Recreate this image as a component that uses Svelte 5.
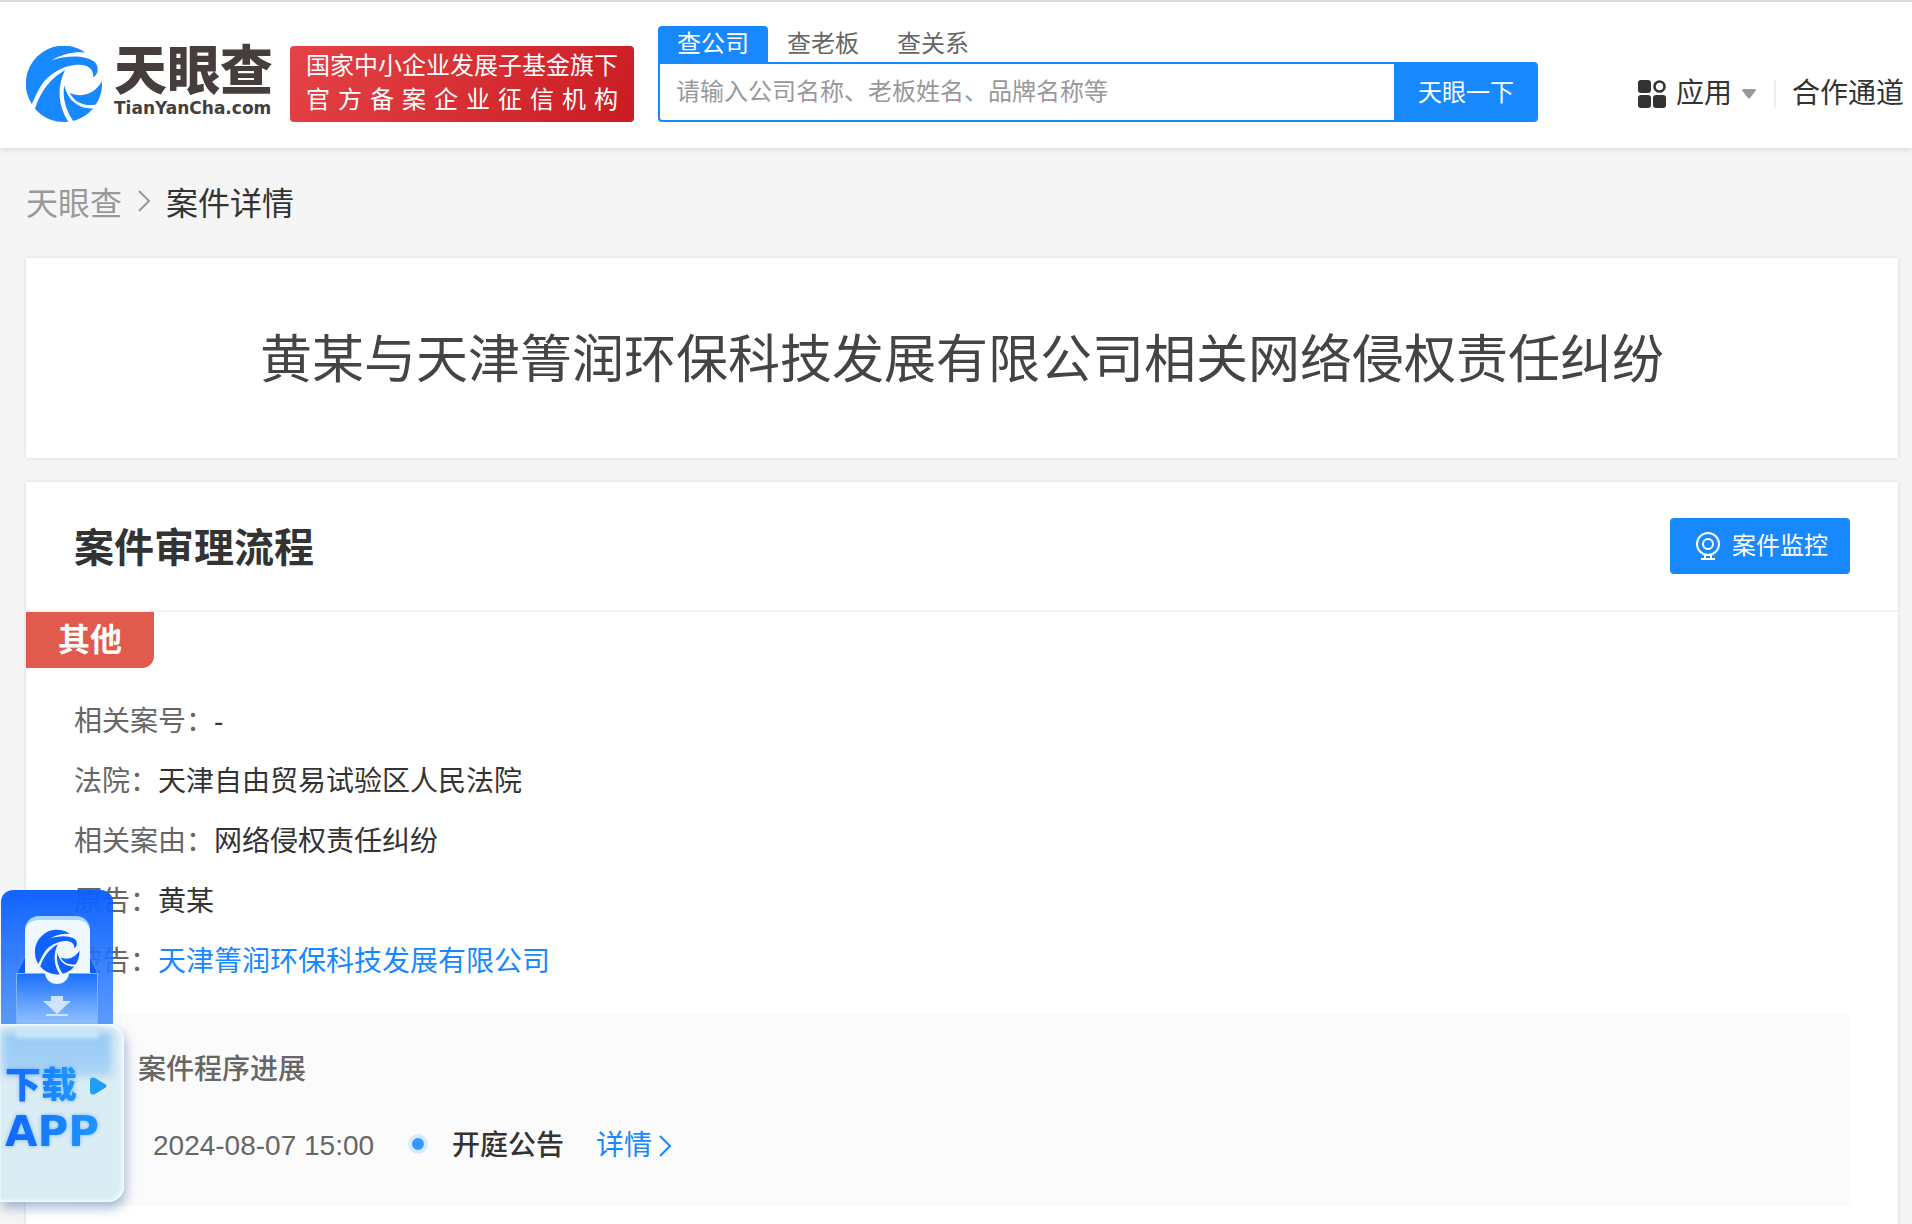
<script lang="ts">
    type Field = { label: string; value: string; href?: string };

    const tabs = ['查公司', '查老板', '查关系'];

    const fields: Field[] = [
        { label: '相关案号', value: '-' },
        { label: '法院', value: '天津自由贸易试验区人民法院' },
        { label: '相关案由', value: '网络侵权责任纠纷' },
        { label: '原告', value: '黄某' },
        { label: '被告', value: '天津箐润环保科技发展有限公司', href: '#company' },
    ];

    let activeTab = 0;
    let keyword = '';
</script>

{#snippet swirl()}
    <path d="M58 6.300A37 37 0 0 0 5.700 56.700C9 49 13 40 18 34C24 27 35 20 46 18.700C57 17 66 20 65.500 30.500C68 29 69.500 26 69.700 24C70.500 17 66 14 61 12.300C49 8.500 36 10.500 24.700 14C35 8 46 5.500 58 6.300Z" />
    <path d="M38 23.700C26 30 15 42 8.700 61A37 37 0 0 0 41.300 73.700C31 58 30 40 38 23.700Z" />
    <path d="M37.300 38.500C35 50 39 63 46 73A37 37 0 0 0 65.500 60.700C52 61.500 41 54 37.300 38.500Z" />
    <path d="M42.500 45.500C53 51 67 47 74 34.300A37 37 0 0 1 68 57C57 59 47 55 42.500 45.500Z" />
{/snippet}

<header class="topbar">
    <a class="logo" href="#home" aria-label="天眼查">
        <svg class="logo_mark" viewBox="0 0 74 74" fill="#1888ff">{@render swirl()}</svg>
        <span class="logo_text">
            <span class="logo_cn">天眼查</span>
            <span class="logo_en">TianYanCha.com</span>
        </span>
    </a>
    <div class="badge">
        <span>国家中小企业发展子基金旗下</span>
        <span>官方备案企业征信机构</span>
    </div>
    <form class="search" on:submit|preventDefault>
        <div class="tabs">
            {#each tabs as tab, i}
                <button type="button" class:active={activeTab === i} on:click={() => (activeTab = i)}>
                    {tab}
                </button>
            {/each}
        </div>
        <div class="search_box">
            <input
                type="text"
                aria-label="搜索"
                placeholder="请输入公司名称、老板姓名、品牌名称等"
                bind:value={keyword}
            />
            <button type="submit">天眼一下</button>
        </div>
    </form>
    <nav>
        <a class="apps" href="#apps">
            <svg width="28" height="28" viewBox="0 0 28 28" fill="#333">
                <rect x="0" y="0" width="13" height="13" rx="3" />
                <rect x="0" y="15" width="13" height="13" rx="3" />
                <rect x="15" y="15" width="13" height="13" rx="3" />
                <circle cx="21.5" cy="6.5" r="5" fill="none" stroke="#333" stroke-width="2.6" />
            </svg>
            应用
            <svg width="14" height="10" viewBox="0 0 14 10" fill="#999">
                <path d="M1 0H13Q14.500 .6 13.500 2L8 9Q7 10 6 9L.5 2Q-.5 .6 1 0Z" />
            </svg>
        </a>
        <a class="partner" href="#partner">合作通道</a>
    </nav>
</header>

<main>
    <div class="crumbs">
        <a href="#home">天眼查</a>
        <svg width="14" height="24" viewBox="0 0 14 24" fill="none" stroke="#999" stroke-width="2">
            <path d="M2 2L12 12L2 22" />
        </svg>
        <span>案件详情</span>
    </div>

    <section class="card title_card">
        <h1>黄某与天津箐润环保科技发展有限公司相关网络侵权责任纠纷</h1>
    </section>

    <section class="card">
        <div class="card_head">
            <h2>案件审理流程</h2>
            <button type="button" class="monitor">
                <svg width="24" height="28" viewBox="0 0 24 28" fill="none" stroke="#fff" stroke-width="2">
                    <circle cx="12" cy="12" r="11" />
                    <circle cx="12" cy="12" r="5" />
                    <path d="M9 22.500V26M15 22.500V26M5 27H19" />
                </svg>
                案件监控
            </button>
        </div>
        <div class="tag">其他</div>
        <dl>
            {#each fields as field}
                <div>
                    <dt>{field.label}{'\uff1a'}</dt>
                    <dd>
                        {#if field.href}
                            <a href={field.href}>{field.value}</a>
                        {:else}
                            {field.value}
                        {/if}
                    </dd>
                </div>
            {/each}
        </dl>
        <div class="progress">
            <h3>案件程序进展</h3>
            <div class="event">
                <time>2024-08-07 15:00</time>
                <i class="dot"></i>
                <strong>开庭公告</strong>
                <a href="#detail">
                    详情
                    <svg width="14" height="24" viewBox="0 0 14 24" fill="none" stroke="#1888ff" stroke-width="2">
                        <path d="M2 2L12 12L2 22" />
                    </svg>
                </a>
            </div>
        </div>
    </section>
</main>

<a class="download" href="#download" aria-label="下载APP">
    <span class="folder">
        <svg width="113" height="134" viewBox="0 0 113 134">
            <defs>
                <linearGradient id="pocket" x1="0" y1="0" x2="0" y2="1">
                    <stop offset="0" stop-color="#1a70fd" />
                    <stop offset="1" stop-color="#93c3fe" />
                </linearGradient>
            </defs>
            <path d="M25 66L16.500 84H98L90 66Z" fill="#0f5df0" stroke="#4c94fb" />
            <rect x="25" y="26" width="65" height="70" rx="14" fill="#a5d6ff" />
            <path d="M25 44Q25 30 39 30H76Q90 30 90 44V84H25Z" fill="#f0f8ff" />
            <path d="M16.500 83.500H97.500V134H16.500Z" fill="url(#pocket)" stroke="#7db5ff" />
            <path d="M45 83H69A12 11 0 0 1 45 83Z" fill="#f0f8ff" />
            <g transform="translate(35 40) scale(.6)" fill="#1161ff">{@render swirl()}</g>
            <path d="M51 106H63V111H71L57 124L43 111H51ZM46 124H68V126H46Z" fill="#cfe5ff" />
        </svg>
    </span>
    <span class="glass">
        <span class="glass_row">
            <span class="glass_text">下载</span>
            <svg width="17" height="18" viewBox="0 0 17 18" fill="#1f9dfb">
                <path d="M0 4Q0-1 5 1L15 7Q18 9 15 11L5 17Q0 19 0 14Z" />
            </svg>
        </span>
        <span class="glass_text glass_app">APP</span>
    </span>
</a>

<style>
    :global(body) {
        background: #f5f5f5;
        color: #333;
        font-family: 'Liberation Sans', 'Noto Sans CJK SC', sans-serif;
        font-size: 28px;
    }

    a {
        color: inherit;
        text-decoration: none;
    }

    button,
    input {
        font: inherit;
        border: none;
        padding: 0;
        cursor: pointer;
    }

    svg {
        display: block;
        flex: none;
    }

    .topbar {
        position: relative;
        display: flex;
        align-items: flex-end;
        box-sizing: border-box;
        height: 148px;
        padding: 0 8px 26px 26px;
        border-top: 2px solid #dadada;
        background: #fff;
        box-shadow: 0 2px 6px rgba(0, 0, 0, 0.1);
        white-space: nowrap;
    }

    .logo {
        display: flex;
        align-items: flex-start;
        gap: 12px;
        width: 246px;
        height: 76px;
        margin-right: 18px;
    }

    .logo_mark {
        width: 76px;
        height: 76px;
    }

    .logo_text {
        display: flex;
        flex-direction: column;
        color: #463d3d;
    }

    .logo_cn {
        font-size: 53px;
        font-weight: 900;
        line-height: 52px;
    }

    .logo_en {
        font-family: 'DejaVu Sans', sans-serif;
        font-size: 17px;
        font-weight: 700;
        line-height: 20px;
    }

    .badge {
        display: flex;
        flex-direction: column;
        box-sizing: border-box;
        width: 344px;
        height: 76px;
        padding: 3px 16px;
        border-radius: 4px;
        background: linear-gradient(120deg, #e54347, #c91c22);
        color: #fff;
        font-size: 24px;
        line-height: 34px;
    }

    .badge span {
        text-align-last: justify;
    }

    .search {
        flex: 0 1 880px;
        margin-left: 24px;
    }

    .tabs {
        display: flex;
    }

    .tabs button {
        width: 110px;
        height: 36px;
        border-radius: 4px 4px 0 0;
        background: none;
        color: #666;
        font-size: 24px;
        line-height: 36px;
    }

    .tabs .active {
        background: #1888ff;
        color: #fff;
    }

    .search_box {
        display: flex;
    }

    .search_box input {
        flex: 1;
        min-width: 0;
        box-sizing: border-box;
        height: 60px;
        padding: 0 16px;
        border: 2px solid #1888ff;
        border-right: none;
        border-radius: 0 0 0 4px;
        outline: none;
        cursor: text;
        font-size: 24px;
    }

    .search_box input::placeholder {
        color: #999;
    }

    .search_box button {
        width: 144px;
        padding-bottom: 4px;
        border-radius: 0 4px 4px 0;
        background: #1888ff;
        color: #fff;
        font-size: 24px;
    }

    nav {
        display: flex;
        align-items: center;
        height: 56px;
        margin-left: auto;
        line-height: 28px;
    }

    .apps {
        display: flex;
        align-items: center;
        gap: 10px;
    }

    .partner {
        margin-left: 18px;
        padding-left: 16px;
        border-left: 2px solid #eee;
    }

    main {
        padding: 0 14px 0 26px;
    }

    .crumbs {
        display: flex;
        align-items: center;
        gap: 15px;
        box-sizing: border-box;
        height: 110px;
        padding-bottom: 4px;
        font-size: 32px;
    }

    .crumbs a {
        color: #999;
    }

    .card {
        margin-bottom: 24px;
        background: #fff;
        box-shadow: 0 0 4px rgba(0, 0, 0, 0.12);
    }

    .title_card {
        padding: 66px 40px 62px;
        text-align: center;
    }

    h1,
    h2,
    h3,
    dl,
    dd {
        margin: 0;
    }

    h1 {
        color: #444;
        font-size: 52px;
        font-weight: 400;
        line-height: 72px;
    }

    .card_head {
        display: flex;
        justify-content: space-between;
        align-items: center;
        padding: 36px 48px;
        border-bottom: 2px solid #f3f3f3;
    }

    h2 {
        padding-top: 4px;
        font-size: 40px;
        font-weight: 700;
        line-height: 52px;
    }

    .monitor {
        display: flex;
        justify-content: center;
        align-items: center;
        gap: 12px;
        width: 180px;
        height: 56px;
        padding-left: 4px;
        border-radius: 4px;
        background: #1888ff;
        color: #fff;
        font-size: 24px;
        line-height: 28px;
    }

    .tag {
        width: 128px;
        border-radius: 0 0 12px 0;
        background: #e05a4d;
        color: #fff;
        font-size: 32px;
        font-weight: 700;
        line-height: 56px;
        text-align: center;
    }

    dl {
        padding: 24px 48px 0;
    }

    dl div {
        display: flex;
        line-height: 60px;
    }

    dt {
        color: #666;
    }

    dl a,
    .event a {
        color: #1888ff;
    }

    .progress {
        margin: 22px 48px 0;
        padding: 34px 64px 38px;
        border-radius: 4px;
        background: #fbfbfb;
    }

    .card:last-child {
        margin-bottom: 0;
        padding-bottom: 48px;
    }

    h3 {
        color: #666;
        font-size: 28px;
        font-weight: 500;
        line-height: 44px;
    }

    .event {
        display: flex;
        align-items: center;
        margin-top: 32px;
        padding-left: 15px;
        line-height: 44px;
    }

    time {
        color: #666;
    }

    .dot {
        width: 12px;
        height: 12px;
        margin: 0 24px 4px 34px;
        border: 4px solid #d6eaff;
        border-radius: 50%;
        background: #3399ff;
    }

    strong {
        font-weight: 500;
    }

    .event a {
        display: flex;
        align-items: center;
        gap: 6px;
        margin-left: 32px;
    }

    .download {
        position: fixed;
        left: 0;
        bottom: 22px;
        width: 124px;
    }

    .folder {
        display: block;
        width: 112px;
        margin-left: 1px;
        border-radius: 12px 12px 0 0;
        background: linear-gradient(rgba(10, 94, 255, 0.97), rgba(60, 138, 250, 0.84));
    }

    .folder svg {
        margin-left: -1px;
    }

    .glass {
        position: relative;
        display: flex;
        flex-direction: column;
        box-sizing: border-box;
        height: 178px;
        padding: 38px 0 0 5px;
        border-radius: 0 16px 16px 0;
        background: #dbedf4;
        box-shadow:
            inset -2px 0 4px #f4fdff,
            inset 0 2px 2px #f4fdff,
            inset 0 -2px 2px #e8f8fc,
            2px 6px 12px rgba(40, 80, 150, 0.4);
        white-space: nowrap;
    }

    /* the folder seen blurred through the glass */
    .glass::before,
    .glass::after {
        content: '';
        position: absolute;
        left: 2px;
        top: 8px;
        width: 110px;
        height: 44px;
        background: linear-gradient(#97c8f6, #aad4f5);
        filter: blur(4px);
    }

    .glass::after {
        left: 16px;
        top: 4px;
        width: 82px;
        height: 10px;
        background: #c9e7fb;
        filter: blur(2px);
    }

    .glass_row {
        position: relative;
        z-index: 1;
        display: flex;
        align-items: center;
        gap: 13px;
        font-size: 36px;
        font-weight: 900;
        line-height: 48px;
    }

    .glass_text {
        background: linear-gradient(90deg, #1266ff, #1f98ff);
        background-clip: text;
        color: transparent;
        filter: drop-shadow(0 0 2px rgba(24, 136, 255, 0.5));
    }

    .glass_app {
        width: 96px;
        font-family: 'DejaVu Sans', sans-serif;
        font-size: 42px;
        font-weight: 700;
        line-height: 44px;
    }
</style>
